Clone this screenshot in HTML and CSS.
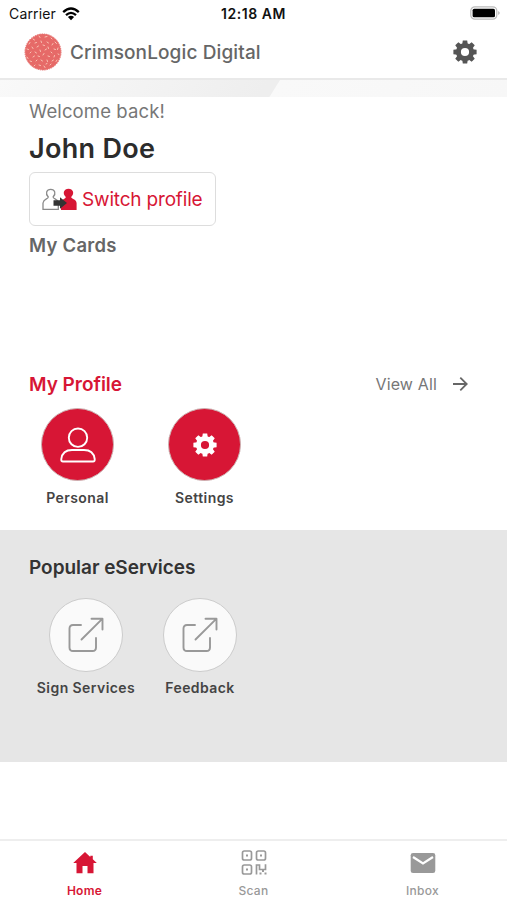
FILE: index.html
```html
<!DOCTYPE html>
<html lang="en">
<head>
<meta charset="utf-8">
<title>CrimsonLogic Digital</title>
<link rel="stylesheet" href="styles.css">
</head>
<body>
<svg class="defs" width="0" height="0">
  <symbol id="gear" viewBox="-12 -12 24 24">
    <circle r="6.600" fill="none" stroke="currentColor" stroke-width="5"/>
    <g fill="currentColor">
      <path id="teeth" d="M-2.800-7.500L-2.200-11.600H2.200L2.800-7.500ZM-2.800 7.500L-2.200 11.600H2.200L2.800 7.500ZM-7.500-2.800L-11.600-2.200V2.200L-7.500 2.800ZM7.500-2.800L11.600-2.200V2.200L7.500 2.800Z"/>
      <use href="#teeth" transform="rotate(45)"/>
    </g>
  </symbol>
  <symbol id="external" viewBox="0 0 36 36">
    <path d="M13 8H5Q1.500 8 1.500 11.500V30.500Q1.500 34 5 34H24.500Q28 34 28 30.500V21M13.500 22.500L34.500 1.700M23.500 1.700H34.500V12.500" fill="none" stroke="#999" stroke-width="1.900" stroke-linecap="round" stroke-linejoin="round"/>
  </symbol>
</svg>
<div class="status">
  <span class="carrier">Carrier</span>
  <svg class="wifi" viewBox="0 0 18 14"><path d="M1.200 5.200Q9-2.200 16.800 5.200M4 8.100Q9 3.600 14 8.100" fill="none" stroke="#000" stroke-width="2.300"/><path d="M5.900 10Q9 7.400 12.100 10L9 13.300Z"/></svg>
  <span class="time">12:18 AM</span>
  <svg class="battery" viewBox="0 0 30 14"><rect x=".8" y=".8" width="26" height="12.400" rx="4" fill="#fff" stroke="#bbb" stroke-width="1.200"/><rect x="2.600" y="2.700" width="22.400" height="8.600" rx="1.600"/><path d="M28.300 5Q31 7 28.300 9Z" fill="#aaa"/></svg>
</div>
<header class="bar">
  <svg class="logo" viewBox="-19 -19 38 38">
    <circle r="17.900" fill="#e66a68"/>
    <circle r="18" fill="none" stroke="#e66a68" stroke-width="1" stroke-dasharray="1.500 .8"/>
    <g fill="none" stroke="#f9c3b4" stroke-width="1" stroke-linecap="round">
      <path d="M-10-13l1.500 1M-4-16l1 1.500M2-15l2-.5M8-14l1 1M12-10l1.500 1.500M-14-8l1-1.500M-8-9l1.500-.5M-2-11l.5 1.500M4-10l1.500 1M9-7l1-1.500M15-4l-.5 1.500M-16-3l1.500.5M-11-5l1 1.500M-6-5l1.500-1M0-7l1.500.5M5-5l.5 1.500M11-3l1.500.5M-13 1l1-1M-8 0l1.500 1M-3-2l.5 1.500M2-2l1.500-1M8 0l1 1M15 2l1 .5M-16 5l1 1.500M-10 5l1.500-1M-5 4l1.500.5M0 3l1-1.500M5 4l1.500.5M11 5l.5-1.500M-13 9l1.500.5M-7 9l1-1M-2 8l1.500 1M4 8l.5 1.500M9 9l1.500-1M14 8l-1 1.500M-9 14l1-1M-4 13l1.500.5M1 14l1 1.500M7 13l1-1M3 12l1-.5"/>
    </g>
  </svg>
  <h1 class="brand">CrimsonLogic Digital</h1>
  <svg class="gear"><use href="#gear"/></svg>
</header>
<div class="banner"></div>
<main>
  <section class="intro">
    <p class="welcome">Welcome back!</p>
    <h2 class="name">John Doe</h2>
    <button class="switch">
      <svg viewBox="0 0 36 23"><path d="M6.300 9C3 5.500 4.500 1.300 8.700 1.300S14.400 5.500 11.100 9C11.300 11.300 15.500 10.500 16.300 14.500V21.300H1V15C1.700 10.500 6.100 11.300 6.300 9Z" fill="none" stroke="#8a8a8a" stroke-width="1.300"/><path d="M23.800 9C20 5.500 22 .8 26.500 .8S33 5.500 29.200 9C29.400 11.500 34 10.500 34.600 15V22H19V15.500C19.500 10.500 23.600 11.500 23.800 9Z" fill="#d71635"/><path d="M11.500 12.300H18V9.300L25 15L18 20.700V17.700H11.500Z" fill="#333"/></svg>
      <span>Switch profile</span>
    </button>
    <h3 class="cards">My Cards</h3>
  </section>
  <section class="profile">
    <div class="head">
      <h3 class="title">My Profile</h3>
      <a class="all"><span>View All</span><svg viewBox="0 0 16 16"><path d="M1 8H14.500M8.300 1.700L14.700 8L8.300 14.300" fill="none" stroke="#666" stroke-width="1.800"/></svg></a>
    </div>
    <div class="row">
      <div class="item"><div class="disc red"><svg class="person" viewBox="0 0 36 36"><circle cx="18" cy="10.700" r="9.200"/><path d="M3 34.500Q1 34.500 1.300 32Q2.500 23 12 23H24Q33.500 23 34.700 32Q35 34.500 33 34.500Z"/></svg></div><span>Personal</span></div>
      <div class="item"><div class="disc red"><svg class="gear"><use href="#gear"/></svg></div><span>Settings</span></div>
    </div>
  </section>
  <section class="services">
    <h3 class="title">Popular eServices</h3>
    <div class="row">
      <div class="item"><div class="disc pale"><svg class="ext"><use href="#external"/></svg></div><span>Sign Services</span></div>
      <div class="item"><div class="disc pale"><svg class="ext"><use href="#external"/></svg></div><span>Feedback</span></div>
    </div>
  </section>
</main>
<nav class="tabs">
  <a class="tab active"><svg viewBox="0 0 26 26"><path d="M13 3L1.200 14H4.500V24.300H10.500V17H15.500V24.300H21.500V14H24.800L20.800 10.300V6.700H18.300V8Z" fill="#d71635"/></svg><span>Home</span></a>
  <a class="tab"><svg viewBox="0 0 26 26"><g fill="none" stroke="#999" stroke-width="1.700"><rect x="1.500" y="2" width="9" height="9" rx="1.800"/><rect x="15.500" y="2" width="9" height="9" rx="1.800"/><rect x="1.500" y="16" width="9" height="9" rx="1.800"/><path d="M15.500 25.500V16H18.500V20.500H24.500V15.200"/></g><path d="M5 5.500h2v2H5ZM19 5.500h2v2H19ZM5 19.500h2v2H5ZM18.500 23.500h2v2h-2ZM23.500 23.500h2v2h-2ZM21 21h2v2h-2Z" fill="#999"/></svg><span>Scan</span></a>
  <a class="tab"><svg viewBox="0 0 26 26"><rect x=".7" y="4" width="24.600" height="20" rx="2.300" fill="#999"/><path d="M3 8L13 14.500L23 8" fill="none" stroke="#fff" stroke-width="2.200"/></svg><span>Inbox</span></a>
</nav>
</body>
</html>
```

FILE: styles.css
```css
* { box-sizing: border-box; }
body { margin: 0; height: 900px; display: flex; flex-direction: column; background: #fff; font-family: Inter, "Liberation Sans", sans-serif; color: #333; overflow: hidden; }
h1, h2, h3, p { margin: 0; white-space: nowrap; }
svg { display: block; flex: none; }
.defs { position: absolute; }
.status { height: 27px; flex: none; display: grid; grid-template-columns: 53px 159px 1fr 30px; align-items: center; padding: 0 7px 0 9px; color: #111; font-size: 14px; white-space: nowrap; }
.carrier { letter-spacing: .15px; }
.wifi { width: 18px; height: 14px; }
.time { font-weight: 600; letter-spacing: .55px; }
.battery { width: 30px; height: 14px; margin-top: -1px; }
.bar { height: 51px; flex: none; display: flex; align-items: center; padding: 0 30px 2px 24px; }
.logo { width: 38px; height: 38px; }
.brand { margin-left: 8px; padding-top: 2px; font-size: 19px; font-weight: 500; color: #666; letter-spacing: .12px; }
.bar .gear { width: 24px; height: 24px; margin-left: auto; color: #555; }
.banner { height: 19px; flex: none; border-top: 2px solid #e9e9e9; background: linear-gradient(122deg, #f9f9f9 0, #eee 52%, #eee 54%, #f9f9f9 54.200%, #f7f7f7 100%); }
.intro { height: 273px; padding: 0 29px; display: flex; flex-direction: column; align-items: flex-start; }
.welcome { height: 28px; line-height: 28px; font-size: 18.500px; letter-spacing: .12px; color: #777; }
.name { height: 47px; line-height: 47px; font-size: 27px; font-weight: 600; letter-spacing: .3px; color: #2c2c2c; }
.switch { width: 187px; height: 54px; border: 1px solid #ddd; border-radius: 6px; background: #fff; padding: 0 12px; display: flex; align-items: center; gap: 4px; font: 400 19px Inter, sans-serif; letter-spacing: -.18px; color: #d71635; white-space: nowrap; }
.switch svg { width: 36px; height: 23px; }
.cards { line-height: 38px; font-size: 18.500px; font-weight: 600; letter-spacing: .25px; color: #666; }
.profile { height: 160px; }
.head { height: 28px; display: flex; justify-content: space-between; align-items: center; padding: 0 39px 0 29px; }
.title { font-size: 19px; font-weight: 600; letter-spacing: -.03px; }
.profile .title { color: #d71635; }
.all { display: flex; align-items: center; gap: 15px; font-size: 16px; letter-spacing: .15px; color: #777; }
.all svg { width: 16px; height: 16px; }
.row { display: flex; }
.profile .row { padding: 10px 0 0 14px; }
.item { display: flex; flex-direction: column; align-items: center; font-size: 14px; font-weight: 600; letter-spacing: .43px; color: #444; white-space: nowrap; }
.profile .item { width: 127px; }
.item span { line-height: 32px; }
.profile .item span { line-height: 33px; }
.disc { width: 73px; height: 73px; border-radius: 50%; display: flex; align-items: center; justify-content: center; border: 1px solid #ccb3b3; }
.red { background: #d71635; color: #fff; }
.person { width: 36px; height: 36px; fill: none; stroke: #fff; stroke-width: 1.900; }
.red .gear { width: 24px; height: 24px; }
.services { height: 232px; background: #e6e6e6; padding: 23px 0 0 29px; }
.services .title { line-height: 29px; }
.services .row { padding-top: 16px; }
.services .item { width: 114px; }
.pale { width: 74px; height: 74px; background: #fafafa; border-color: #ccc; }
.ext { width: 36px; height: 36px; }
.tabs { margin-top: auto; height: 61px; flex: none; border-top: 2px solid #eee; display: flex; justify-content: space-between; }
.tab { width: 169px; display: flex; flex-direction: column; align-items: center; padding-top: 8px; color: #999; font-size: 12px; font-weight: 500; letter-spacing: .25px; }
.tab svg { width: 26px; height: 26px; }
.tab span { line-height: 31px; }
.active { color: #d71635; font-weight: 600; }
```
